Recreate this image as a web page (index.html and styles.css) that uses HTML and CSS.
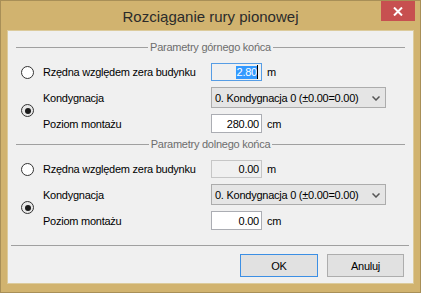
FILE: index.html
```html
<!doctype html>
<html>
<head>
	<meta charset="utf-8">
	<title>Rozciąganie rury pionowej</title>
	<link rel="stylesheet" href="styles.css">
</head>
<body>
	<div class="window">
		<div class="titlebar">
			<span class="title">Rozciąganie rury pionowej</span>
			<div class="close">
				<svg width="10" height="9" viewBox="0 0 10 9"><path d="M1 0.5 L9 8.5 M9 0.5 L1 8.5" stroke="#fff" stroke-width="2"/></svg>
			</div>
		</div>
		<div class="client">
			<div class="group-head"><span>Parametry górnego końca</span></div>
			<div class="group">
				<span class="radio r-top"></span>
				<span class="label">Rzędna względem zera budynku</span>
				<div class="field focus"><span class="sel">2.80</span><span class="caret"></span></div>
				<span class="unit">m</span>

				<span class="radio checked r-mid"></span>
				<span class="label">Kondygnacja</span>
				<div class="combo"><span>0. Kondygnacja 0 (±0.00=0.00)</span><svg width="8" height="5" viewBox="0 0 8 5"><path d="M0.5 0.5 L4 4 L7.5 0.5" fill="none" stroke="#555" stroke-width="1.5"/></svg></div>

				<span class="label">Poziom montażu</span>
				<div class="field">280.00</div>
				<span class="unit">cm</span>
			</div>

			<div class="group-head second"><span>Parametry dolnego końca</span></div>
			<div class="group">
				<span class="radio r-top"></span>
				<span class="label">Rzędna względem zera budynku</span>
				<div class="field readonly">0.00</div>
				<span class="unit">m</span>

				<span class="radio checked r-mid"></span>
				<span class="label">Kondygnacja</span>
				<div class="combo"><span>0. Kondygnacja 0 (±0.00=0.00)</span><svg width="8" height="5" viewBox="0 0 8 5"><path d="M0.5 0.5 L4 4 L7.5 0.5" fill="none" stroke="#555" stroke-width="1.5"/></svg></div>

				<span class="label">Poziom montażu</span>
				<div class="field">0.00</div>
				<span class="unit">cm</span>
			</div>

			<div class="sep"></div>
			<div class="buttons">
				<div class="btn default">OK</div>
				<div class="btn">Anuluj</div>
			</div>
		</div>
	</div>
</body>
</html>
```

FILE: styles.css
```css
*{
	margin:0;
	padding:0;
	box-sizing:border-box;
}
body{
	font-family:"Liberation Sans",Arial,sans-serif;
	font-size:11px;
	letter-spacing:-0.25px;
	color:#000;
}
.window{
	width:421px;
	height:293px;
	display:flex;
	flex-direction:column;
	background:#d1b36f;
	border:1px solid #a88f57;
	padding:0 6px 8px 6px;
}
.titlebar{
	position:relative;
	height:29px;
	display:flex;
	align-items:center;
	justify-content:center;
}
.title{
	font-size:15px;
	letter-spacing:0;
	color:#2b2b2b;
	margin-top:1px;
}
.close{
	position:absolute;
	top:0;
	right:-1px;
	width:34px;
	height:20px;
	background:#c75050;
	display:flex;
	align-items:center;
	justify-content:center;
}
.client{
	flex:1;
	background:#f0f0f0;
	border:1px solid #dccb9c;
	display:flex;
	flex-direction:column;
}
.group-head{
	margin:9px 8px 0 8px;
	height:14px;
	display:flex;
	align-items:center;
	color:#6d6d6d;
}
.group-head:before,.group-head:after{
	content:"";
	flex:1;
	height:1px;
	background:#a0a0a0;
}
.group-head span{
	padding:0 2px;
}
.group-head.second{
	margin-top:4px;
}
.group{
	margin-top:9px;
	padding-left:13px;
	display:grid;
	grid-template-columns:13px 177px 51px auto;
	grid-template-rows:18px 21px 19px;
	row-gap:6px;
	align-items:center;
}
.radio{
	width:13px;
	height:13px;
	border:1px solid #333;
	border-radius:50%;
	background:#fff;
	display:flex;
	align-items:center;
	justify-content:center;
}
.radio.checked{
	background:#e8e8e8;
}
.radio.checked:after{
	content:"";
	width:6px;
	height:6px;
	border-radius:50%;
	background:#1a1a1a;
}
.r-top{
	grid-column:1;
}
.r-mid{
	grid-column:1;
	grid-row:2 / span 2;
	margin-top:1px;
}
.label{
	grid-column:2;
	padding-left:9px;
	white-space:nowrap;
}
.field{
	grid-column:3;
	height:100%;
	border:1px solid #abadb3;
	background:#fff;
	display:flex;
	align-items:center;
	justify-content:flex-end;
	padding-right:2px;
}
.field.focus{
	border-color:#569de5;
	background:#f0f0f0;
	padding-right:3px;
}
.field.readonly{
	border-color:#c6c6c6;
	background:#f0f0f0;
}
.sel{
	background:#3399ff;
	color:#fff;
	line-height:13px;
	padding:0 0 0 1px;
}
.caret{
	width:1px;
	height:14px;
	background:#000;
}
.unit{
	grid-column:4;
	padding-left:5px;
}
.combo{
	grid-column:3 / span 2;
	width:175px;
	height:100%;
	border:1px solid #acacac;
	background:#e5e5e5;
	display:flex;
	align-items:center;
	justify-content:space-between;
	padding:0 5px 0 3px;
}
.combo svg{
	margin-top:1px;
}
.sep{
	margin:15px 4px 0 3px;
	height:1px;
	background:#a0a0a0;
}
.buttons{
	margin:8px 9px 0 0;
	display:flex;
	justify-content:flex-end;
	gap:9px;
}
.btn{
	width:78px;
	height:23px;
	border:1px solid #adadad;
	background:#e1e1e1;
	display:flex;
	align-items:center;
	justify-content:center;
}
.btn:last-child{
	width:77px;
}
.btn.default{
	border-color:#3c8fe4;
}
```
